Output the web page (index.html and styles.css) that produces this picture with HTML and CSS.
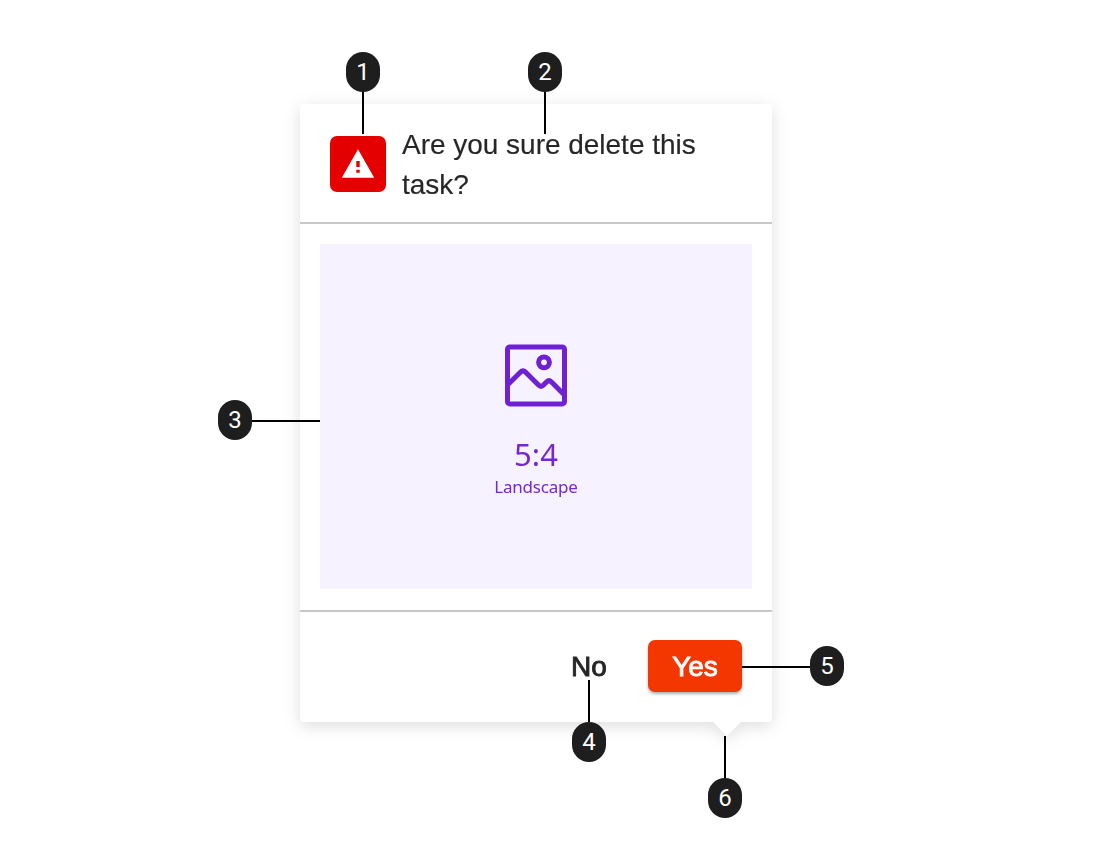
FILE: index.html
```html
<!DOCTYPE html>
<html lang="en">
<head>
<meta charset="utf-8">
<title>Popconfirm anatomy</title>
<link rel="stylesheet" href="styles.css">
</head>
<body>
<main class="canvas">
  <section class="card">
    <header class="card-header">
      <span class="alert">
        <svg width="56" height="56" viewBox="0 0 56 56"><path fill="#fff" fill-rule="evenodd" d="M28 13.300 44.200 41.700H11.800ZM26.300 25v6.100h3.400V25Zm0 8.700v3h3.400v-3Z"/></svg>
      </span>
      <h1 class="title"><span class="title-line">Are you sure delete this</span> <span class="title-line">task?</span></h1>
    </header>
    <div class="card-body">
      <div class="placeholder">
        <svg class="picture" width="64" height="64" viewBox="0 0 64 64" fill="none" stroke="#6f20d2" stroke-width="5">
          <rect x="3.500" y="3.900" width="57" height="57" rx="2.500"/>
          <circle cx="40" cy="19.300" r="5.400"/>
          <path stroke-linejoin="round" d="M3.500 42 16.300 29.200Q19 26.500 21.700 29.200L34.500 42Q37 44.500 39.500 42L42.500 39Q45 36.500 47.500 39L60.500 52"/>
        </svg>
        <span class="ratio">5:4</span>
        <span class="shape">Landscape</span>
      </div>
    </div>
    <footer class="card-footer">
      <button class="btn btn-no">No</button>
      <button class="btn btn-yes">Yes</button>
    </footer>
    <svg class="arrow" width="30" height="15" viewBox="0 0 30 15"><path fill="#fff" d="M0 0H30L15 15Z"/></svg>
  </section>

  <div class="callout c1"><span class="badge">1</span><i class="line"></i></div>
  <div class="callout c2"><span class="badge">2</span><i class="line"></i></div>
  <div class="callout across c3"><span class="badge">3</span><i class="line"></i></div>
  <div class="callout up c4"><span class="badge">4</span><i class="line"></i></div>
  <div class="callout across left c5"><span class="badge">5</span><i class="line"></i></div>
  <div class="callout up c6"><span class="badge">6</span><i class="line"></i></div>
</main>
</body>
</html>
```
FILE: styles.css
```css
* { box-sizing: border-box; }

body {
  margin: 0;
  background: #fff;
  font-family: "Liberation Sans", Arial, sans-serif;
}

.canvas {
  position: relative;
  width: 1096px;
  height: 842px;
  padding: 104px 0 0 300px;
  overflow: hidden;
}

.card {
  position: relative;
  display: flex;
  flex-direction: column;
  width: 472px;
  height: 618px;
  background: #fff;
  border-radius: 4px;
  filter: drop-shadow(0 4px 8px rgba(0, 0, 0, 0.13));
}

.card-header {
  display: flex;
  gap: 16px;
  height: 120px;
  padding: 21px 30px 0;
  border-bottom: 2px solid #c8c8c8;
}

.alert {
  width: 56px;
  height: 56px;
  margin-top: 11px;
  border-radius: 7px;
  background: #e50000;
}

.alert svg { display: block; }

.title {
  margin: 0;
  color: #262626;
  font-size: 28px;
  font-weight: 400;
  line-height: 40px;
}

.title-line {
  display: block;
  white-space: nowrap;
  letter-spacing: -0.02px;
  -webkit-text-stroke: 0.15px currentColor;
}

.card-body {
  height: 386px;
  padding: 20px 20px 21px;
}

.placeholder {
  display: flex;
  flex-direction: column;
  align-items: center;
  height: 345px;
  padding-top: 99px;
  background: #f7f2ff;
  color: #7429d0;
  font-family: "Noto Sans", sans-serif;
}

.ratio {
  margin-top: 27px;
  font-size: 31px;
  line-height: 40px;
}

.shape {
  margin-top: 1px;
  font-size: 17px;
  line-height: 24px;
  letter-spacing: -0.2px;
}

.card-footer {
  display: flex;
  justify-content: flex-end;
  gap: 16px;
  height: 112px;
  padding: 28px 30px 0 0;
  border-top: 2px solid #c8c8c8;
}

.btn {
  height: 52px;
  padding: 1px 0 0;
  border: 0;
  border-radius: 7px;
  background: none;
  color: #262626;
  font: 28px/51px "Liberation Sans", Arial, sans-serif;
  -webkit-text-stroke: 0.9px currentColor;
}

.btn-no { width: 86px; }

.btn-yes {
  width: 94px;
  background: #f43600;
  color: #fff;
  box-shadow: 0 2px 3px rgba(0, 0, 0, 0.32);
}

.arrow {
  position: absolute;
  left: 412px;
  top: 617px;
}

.callout {
  position: absolute;
  display: flex;
  flex-direction: column;
  align-items: center;
}

.callout.up { flex-direction: column-reverse; }
.callout.across { flex-direction: row; }
.callout.left { flex-direction: row-reverse; }

.badge {
  width: 34px;
  height: 40px;
  border-radius: 17px;
  background: #1e1e1e;
  color: #fff;
  font: 24px/40px Roboto, sans-serif;
  text-align: center;
}

.line {
  width: 2px;
  height: 42px;
  background: #000;
}

.across .line {
  width: 68px;
  height: 2px;
  margin-top: 2px;
}

.c1 { left: 346px; top: 52px; }
.c2 { left: 528px; top: 52px; }
.c3 { left: 218px; top: 400px; }
.c4 { left: 572px; top: 680px; }
.c5 { left: 742px; top: 646px; }
.c6 { left: 708px; top: 736px; }
```
